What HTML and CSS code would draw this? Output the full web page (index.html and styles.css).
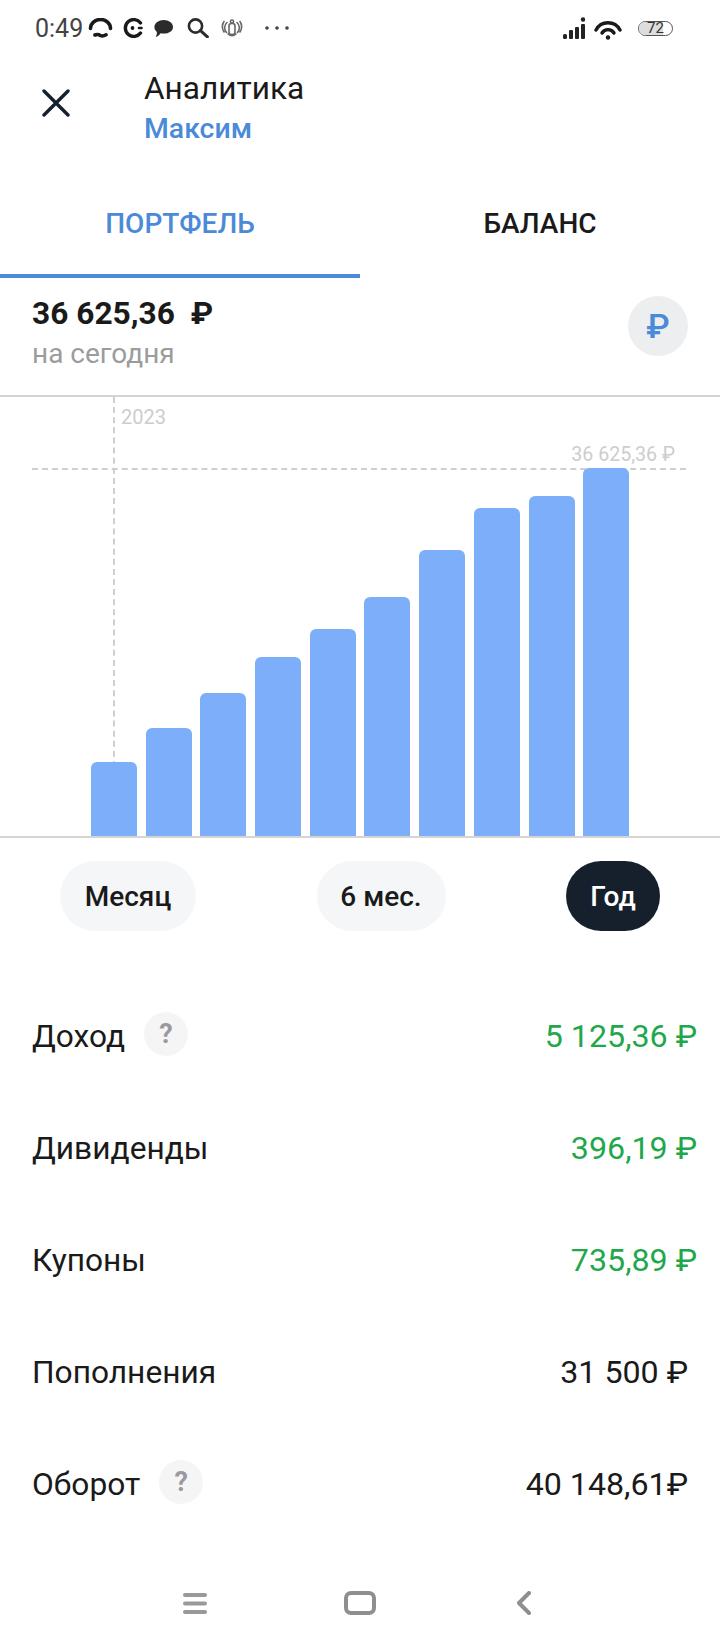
FILE: index.html
```html
<!DOCTYPE html>
<html lang="ru">
  <head>
    <meta charset="UTF-8" />
    <meta name="viewport" content="width=device-width, initial-scale=1.0" />
    <title>Аналитика</title>
    <link rel="stylesheet" href="styles.css">
  </head>
  <body>
    <div class="screen">
      <!-- status bar -->
      <div class="status">
        <span class="time">0:49</span>
        <svg class="st st-arc" width="25" height="20" viewBox="0 0 25 20" fill="none" stroke="#1a1a1a" stroke-width="3.6" stroke-linecap="round"><path d="M2.5 10.5 A10 9 0 0 1 22.5 10.5"/><path d="M7 17 Q10 15.8 12.5 17.6 Q15 18.6 18 16.8"/></svg>
        <svg class="st st-c" width="20" height="20" viewBox="0 0 20 20" fill="none" stroke="#1a1a1a" stroke-width="3.4" stroke-linecap="round"><path d="M17.5 5 A8.4 8.4 0 1 0 17.5 15"/><circle cx="9.5" cy="10" r="1.9" fill="#1a1a1a" stroke="none"/><path d="M16 10 h2.5" stroke-width="2.6"/></svg>
        <svg class="st st-chat" width="19" height="19" viewBox="0 0 19 19"><path fill="#2b2b2b" d="M9.8 1 C14.8 1 19 3.9 19 8 C19 12.1 14.8 14.6 9.8 14.6 C8.6 14.6 7.6 14.5 6.6 14.2 C5.4 16 3.6 17.6 1.8 18 C2.6 16.4 3 14.6 2.9 12.9 C1.2 11.6 .4 9.9 .4 8 C.4 3.9 4.8 1 9.8 1 Z"/></svg>
        <svg class="st st-search" width="22" height="20" viewBox="0 0 22 20" fill="none" stroke="#2b2b2b" stroke-width="2.6" stroke-linecap="round"><circle cx="8.5" cy="8" r="6.6"/><path d="M13.5 12.6 L20.4 18.8" stroke-width="3"/></svg>
        <svg class="st st-badge" width="22" height="18" viewBox="0 0 22 18" fill="none" stroke="#666" stroke-width="1.6" stroke-linecap="round"><rect x="8" y="4.5" width="6" height="11" rx="2.5"/><circle cx="11" cy="2.6" r="1.6"/><path d="M6 3.5 A7 7 0 0 0 5.5 13.5 M16 3.5 A7 7 0 0 1 16.5 13.5 M3 2.5 A9 9 0 0 0 1.5 9 A9 9 0 0 0 3 13 M19 2.5 A9 9 0 0 1 20.5 9 A9 9 0 0 1 19 13 M7 15 Q11 18.5 15 15"/></svg>
        <svg class="st st-dots" width="24" height="4" viewBox="0 0 24 4" fill="#444"><circle cx="2" cy="2" r="1.8"/><circle cx="12" cy="2" r="1.8"/><circle cx="22" cy="2" r="1.8"/></svg>
        <span class="status-right">
          <svg width="22" height="23" viewBox="0 0 22 23" fill="#222"><rect x="0" y="17" width="4" height="5" rx="1.5"/><rect x="6" y="13" width="4" height="9" rx="1"/><rect x="12" y="10" width="4" height="12" rx="1"/><rect x="18" y="7" width="4" height="15" rx="1"/><circle cx="20" cy="2.5" r="2.2"/></svg>
          <svg class="st-wifi" width="28" height="23" viewBox="0 0 28 23" fill="none" stroke="#1a1a1a" stroke-width="3.4" stroke-linecap="round"><path d="M2 13 A13.5 13.5 0 0 1 26 13"/><path d="M8 16 A7 7 0 0 1 20 16"/><circle cx="14" cy="20.5" r="2.2" fill="#1a1a1a" stroke="none"/></svg>
          <span class="battery"><span class="battery-fill"></span><span class="battery-num">72</span></span>
        </span>
      </div>

      <!-- header -->
      <div class="header">
        <svg class="close" width="28" height="28" viewBox="0 0 28 28" fill="none" stroke="#16202c" stroke-width="3.4" stroke-linecap="round"><path d="M2 2 L26 26 M26 2 L2 26"/></svg>
        <div class="titles">
          <div class="title">Аналитика</div>
          <div class="subtitle">Максим</div>
        </div>
      </div>

      <!-- tabs -->
      <div class="tabs">
        <div class="tab active">ПОРТФЕЛЬ</div>
        <div class="tab">БАЛАНС</div>
      </div>

      <!-- summary -->
      <div class="summary">
        <div>
          <div class="amount">36 625,36&nbsp; ₽</div>
          <div class="caption">на сегодня</div>
        </div>
        <div class="currency">₽</div>
      </div>

      <!-- chart -->
      <div class="chart">
        <div class="vline"></div>
        <div class="hline"></div>
        <span class="year">2023</span>
        <span class="peak">36 625,36 ₽</span>
        <div class="bars">
          <div class="bar" style="height: 74px"></div>
          <div class="bar" style="height: 108px"></div>
          <div class="bar" style="height: 143px"></div>
          <div class="bar" style="height: 179px"></div>
          <div class="bar" style="height: 207px"></div>
          <div class="bar" style="height: 239px"></div>
          <div class="bar" style="height: 286px"></div>
          <div class="bar" style="height: 328px"></div>
          <div class="bar" style="height: 340px"></div>
          <div class="bar" style="height: 368px"></div>
        </div>
      </div>

      <!-- period -->
      <div class="periods">
        <div class="pill pill-month">Месяц</div>
        <div class="pill pill-half">6 мес.</div>
        <div class="pill pill-year">Год</div>
      </div>

      <!-- rows -->
      <div class="rows">
        <div class="row">
          <div class="row-name">Доход <span class="help">?</span></div>
          <div class="value green">5 125,36 ₽</div>
        </div>
        <div class="row">
          <div class="row-name">Дивиденды</div>
          <div class="value green">396,19 ₽</div>
        </div>
        <div class="row">
          <div class="row-name">Купоны</div>
          <div class="value green">735,89 ₽</div>
        </div>
        <div class="row">
          <div class="row-name">Пополнения</div>
          <div class="value plain">31 500 ₽</div>
        </div>
        <div class="row">
          <div class="row-name">Оборот <span class="help">?</span></div>
          <div class="value plain">40 148,61₽</div>
        </div>
      </div>

      <!-- nav bar -->
      <div class="nav">
        <svg width="24" height="21" viewBox="0 0 24 21" fill="#999"><rect width="24" height="4" rx="2"/><rect y="8.5" width="24" height="4" rx="2"/><rect y="17" width="24" height="4" rx="2"/></svg>
        <svg width="32" height="24" viewBox="0 0 32 24" fill="none" stroke="#8f8f8f" stroke-width="4"><rect x="2" y="2" width="28" height="20" rx="5"/></svg>
        <svg class="nav-back" width="15" height="24" viewBox="0 0 15 24" fill="none" stroke="#8f8f8f" stroke-width="4" stroke-linecap="round" stroke-linejoin="round"><path d="M13 2 L3 12 L13 22"/></svg>
      </div>
    </div>
  </body>
</html>
```

FILE: styles.css
```css
body {
  margin: 0;
  padding: 0;
  background-color: #fff;
  font-family: Roboto, "Noto Sans", sans-serif;
  color: #1a1a1a;
}
.screen {
  width: 720px;
  height: 1650px;
  overflow: hidden;
}

/* status bar */
.status {
  height: 56px;
  display: flex;
  align-items: center;
  padding: 0 47px 0 35px;
  box-sizing: border-box;
}
.time {
  font-size: 25px;
  color: #444;
  margin-right: 5px;
}
.st-c { margin-left: 10px; }
.st-chat { margin-left: 11px; }
.st-search { margin-left: 14px; }
.st-badge { margin-left: 12px; }
.st-dots { margin-left: 22px; }
.status-right {
  margin-left: auto;
  display: flex;
  align-items: center;
}
.st-wifi { margin-left: 9px; }
.battery {
  position: relative;
  width: 35px;
  height: 15px;
  margin-left: 16px;
  border: 1.5px solid #555;
  border-radius: 8px;
  box-sizing: border-box;
  display: flex;
  align-items: center;
  justify-content: center;
}
.battery-fill {
  position: absolute;
  left: 0;
  top: 0;
  bottom: 0;
  width: 72%;
  border-radius: 6px 0 0 6px;
  background-color: #ddd;
}
.battery-num {
  position: relative;
  font-size: 15px;
  line-height: 12px;
  color: #333;
}

/* header */
.header {
  display: flex;
  align-items: center;
  height: 94px;
  padding-left: 42px;
}
.close { margin-right: 74px; }
.titles { padding-top: 10px; }
.title {
  font-size: 31.6px;
  line-height: 41px;
}
.subtitle {
  font-size: 28.4px;
  line-height: 40px;
  font-weight: 500;
  color: #4a8ad8;
}

/* tabs */
.tabs {
  display: flex;
  height: 128px;
}
.tab {
  width: 360px;
  box-sizing: border-box;
  padding-top: 56px;
  font-size: 28px;
  line-height: 36px;
  font-weight: 500;
  text-align: center;
}
.tab.active {
  color: #4a8ad8;
  border-bottom: 4px solid #4a8ad8;
}

/* summary */
.summary {
  height: 117px;
  display: flex;
  justify-content: space-between;
  padding: 16px 32px 0;
  box-sizing: border-box;
}
.amount {
  font-size: 31.7px;
  line-height: 40px;
  font-weight: 700;
}
.caption {
  font-size: 28px;
  line-height: 40px;
  color: #9a9c9e;
}
.currency {
  width: 60px;
  height: 60px;
  margin-top: 2px;
  border-radius: 50%;
  background-color: #eceef0;
  color: #4a8ad8;
  font-size: 34px;
  font-weight: 500;
  display: flex;
  align-items: center;
  justify-content: center;
}

/* chart */
.chart {
  position: relative;
  height: 443px;
  border-top: 2px solid #d4d4d4;
  border-bottom: 2px solid #d4d4d4;
  box-sizing: border-box;
}
.bars {
  height: 100%;
  display: flex;
  align-items: flex-end;
  gap: 8.7px;
  padding-left: 91px;
  box-sizing: border-box;
}
.bar {
  position: relative;
  width: 46px;
  background-color: #7caefa;
  border-radius: 6px 6px 0 0;
}
.vline {
  position: absolute;
  left: 113px;
  top: 0;
  height: 370px;
  border-left: 2px dashed #cfcfcf;
}
.hline {
  position: absolute;
  left: 32px;
  right: 34px;
  top: 71px;
  border-top: 2px dashed #cfcfcf;
}
.year {
  position: absolute;
  left: 121px;
  top: 8px;
  font-size: 20px;
  color: #cdcdcd;
}
.peak {
  position: absolute;
  right: 45px;
  top: 46px;
  font-size: 19.6px;
  color: #cdcdcd;
}

/* period pills */
.periods {
  display: flex;
  justify-content: space-between;
  padding: 23px 60px 0;
}
.pill {
  height: 70px;
  border-radius: 35px;
  background-color: #f4f6f8;
  font-size: 28px;
  font-weight: 500;
  display: flex;
  align-items: center;
  justify-content: center;
}
.pill-month { width: 136px; }
.pill-half { width: 129px; }
.pill-year {
  width: 94px;
  background-color: #16202c;
  color: #fff;
}

/* rows */
.rows { margin-top: 49px; }
.row {
  height: 112px;
  display: flex;
  align-items: center;
  justify-content: space-between;
  padding: 0 23px 0 32px;
}
.row-name {
  display: flex;
  align-items: center;
  gap: 19px;
  font-size: 31.7px;
}
.value { font-size: 32.2px; }
.help {
  width: 44px;
  height: 44px;
  border-radius: 50%;
  background-color: #f5f5f6;
  color: #9a9a9e;
  font-size: 27px;
  font-weight: 700;
  display: flex;
  align-items: center;
  justify-content: center;
  margin-top: -4px;
}
.green { color: #1fa84b; }
.value.plain { margin-right: 9px; }

/* nav */
.nav {
  display: flex;
  align-items: center;
  margin-top: 51px;
  padding-left: 183px;
  gap: 137px;
}
.nav-back { margin-left: 3px; }
```
